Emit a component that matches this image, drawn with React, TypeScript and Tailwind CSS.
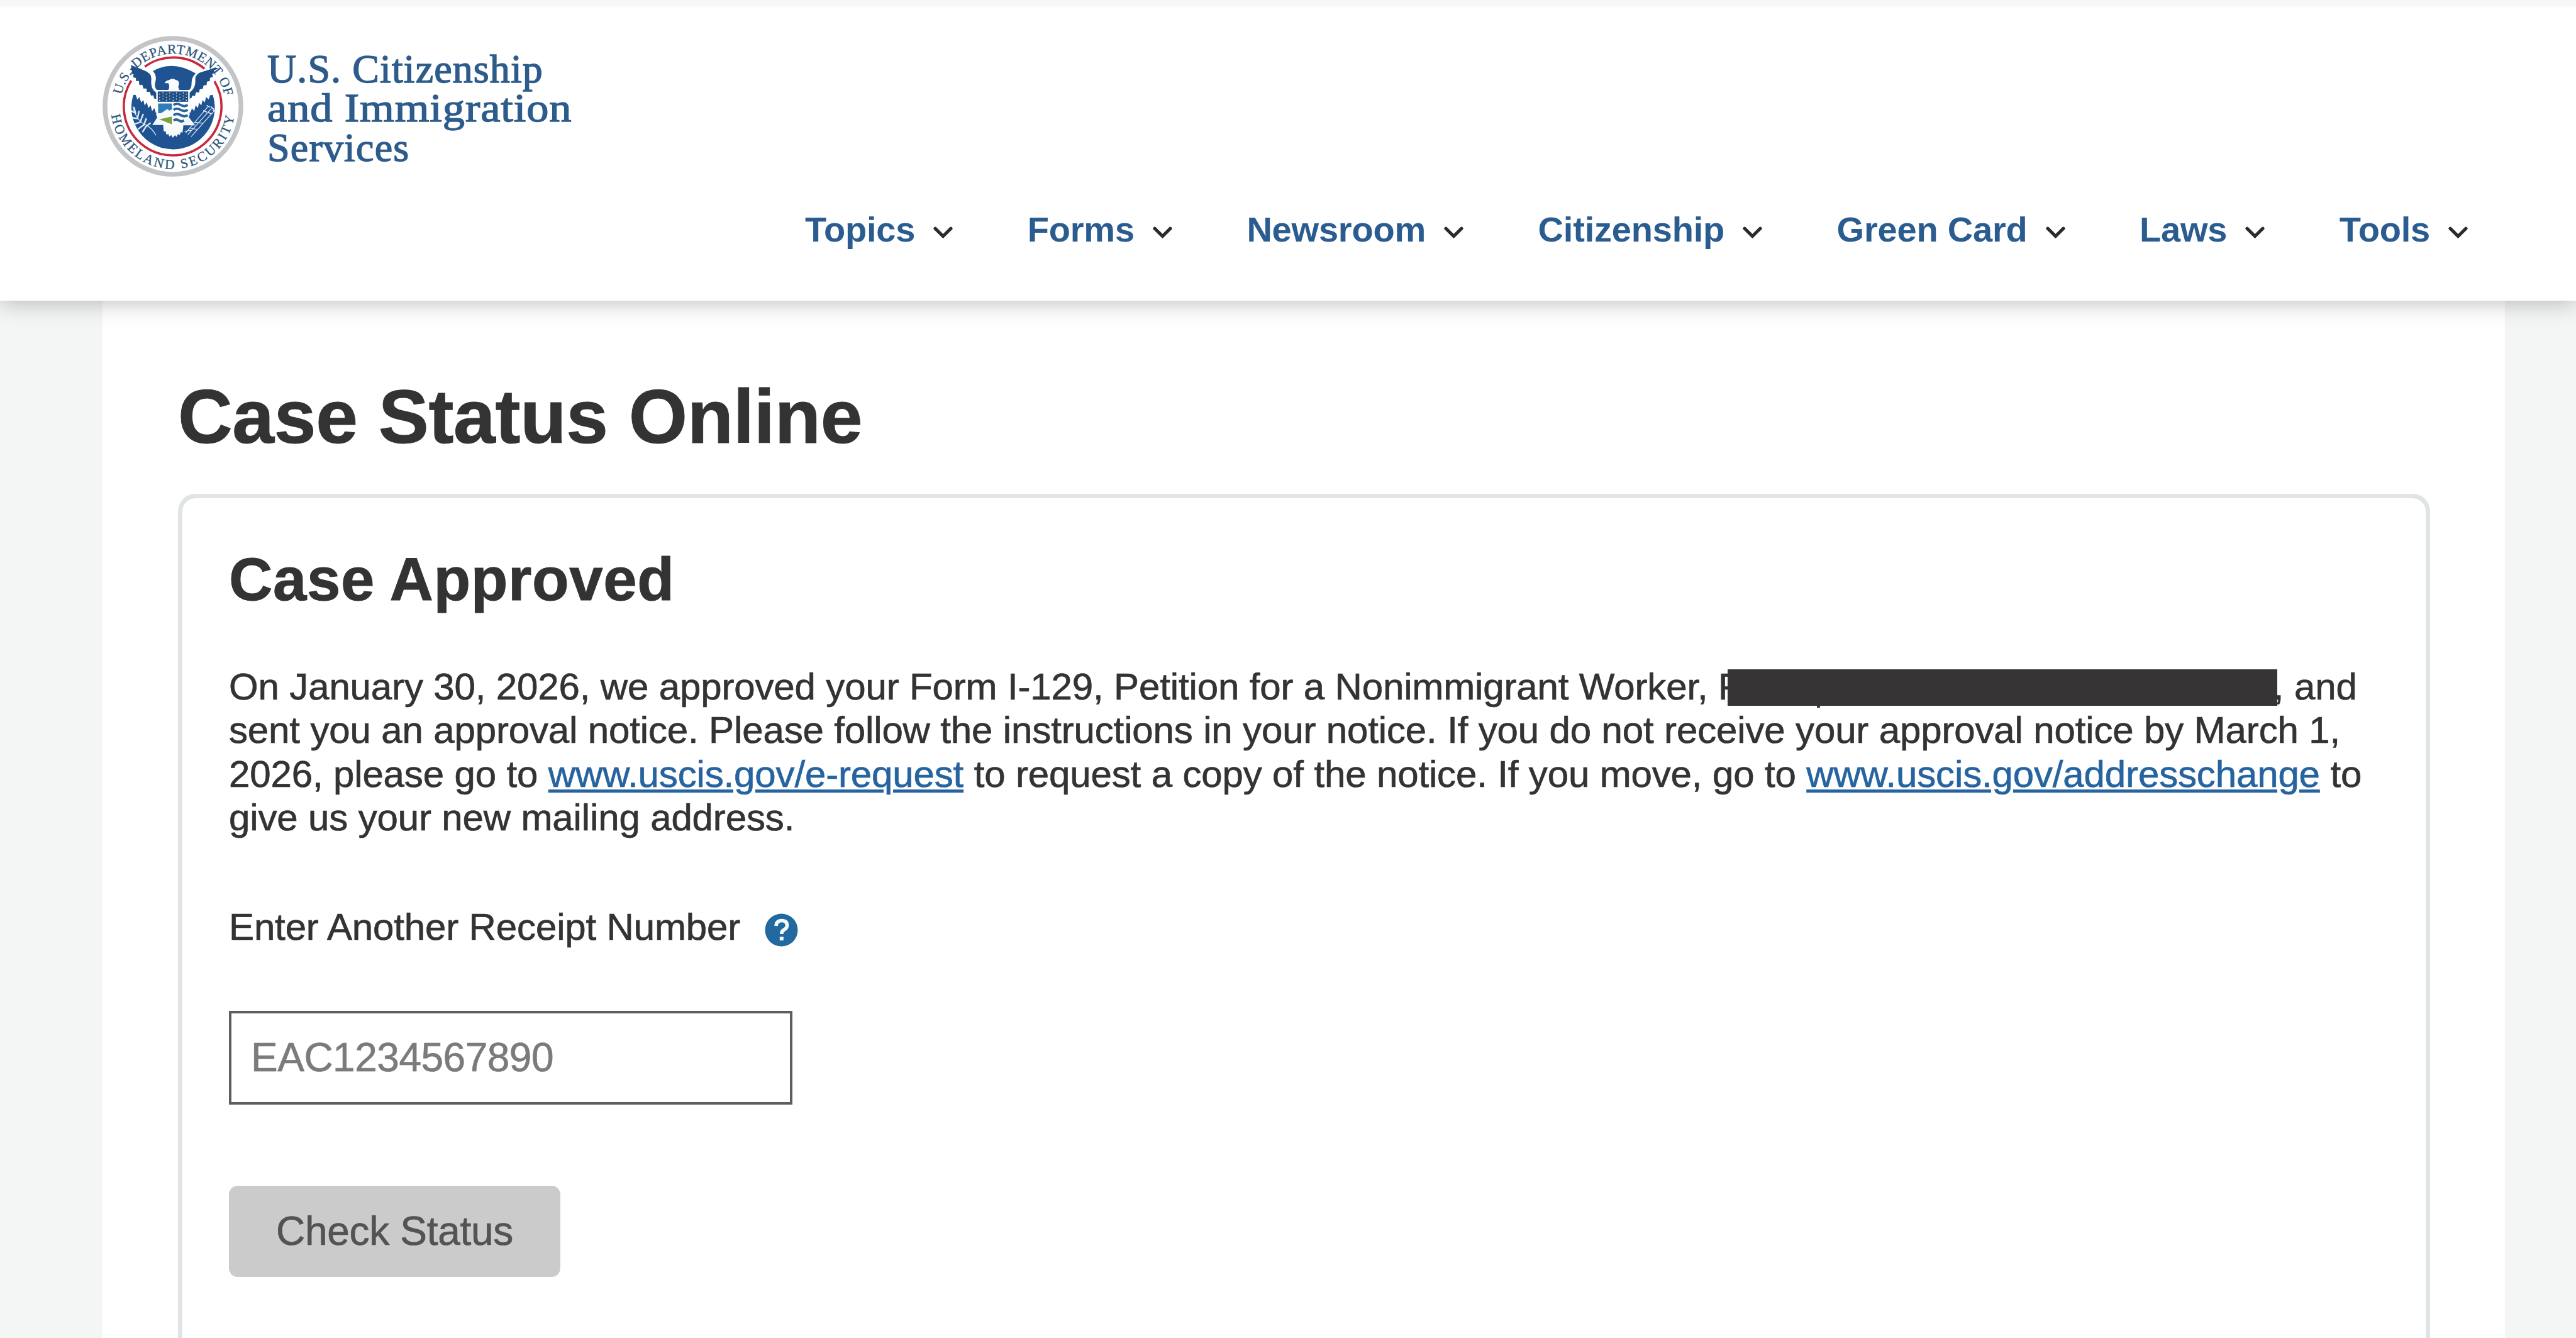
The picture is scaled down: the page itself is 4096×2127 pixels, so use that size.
import React, { useState } from 'react';

const NAV_ITEMS = ['Topics', 'Forms', 'Newsroom', 'Citizenship', 'Green Card', 'Laws', 'Tools'];

const Chevron: React.FC = () => (
  <svg className="w-[31px] h-[19px] mt-[8px]" viewBox="0 0 31 19" fill="none">
    <path d="M3 3.2 L15.5 15.5 L28 3.2" stroke="#2b2b2b" strokeWidth="5.2" strokeLinecap="round" />
  </svg>
);

const Seal: React.FC = () => (
  <svg className="w-[224px] h-[224px] shrink-0" viewBox="68 70 750 750">
    <defs>
      <path id="sealTop" d="M170 384 A280 280 0 0 1 719 396" />
      <path id="sealBottom" d="M114 487 A331 331 0 0 0 772 480" />
    </defs>
    <circle cx="443" cy="445" r="362" fill="#ffffff" stroke="#c3c4c8" strokeWidth="25" />

    {/* red ring, broken by the wing tips */}
    <g fill="none" stroke="#c8283c" strokeWidth="12">
      <path d="M293 234 A260 260 0 0 1 611 245" />
      <path d="M221 308 A260 260 0 1 0 664 312" />
    </g>

    {/* lettering */}
    <g fill="#2c557c" stroke="#2c557c" strokeWidth="1" fontFamily="'Liberation Serif', serif" fontSize="72">
      <text>
        <textPath href="#sealTop" textLength="130" lengthAdjust="spacing">U.S.</textPath>
      </text>
      <text>
        <textPath href="#sealTop" startOffset="160" textLength="604" lengthAdjust="spacing">DEPARTMENT OF</textPath>
      </text>
      <text>
        <textPath href="#sealBottom" startOffset="5" textLength="944" lengthAdjust="spacing">HOMELAND SECURITY</textPath>
      </text>
    </g>

    {/* field */}
    <path
      fill="#1f5391"
      d="M232 385 L244 384 L254 410 L264 396 L274 424 L286 412 L292 440 L304 424 L312 454 L324 440 L332 470 L344 454 L352 480 L362 464 L362 515 L525 515 L525 466 L536 480 L544 456 L556 470 L564 440 L576 454 L582 426 L594 440 L600 412 L612 424 L620 396 L634 408 L640 386 L655 384 A222 222 0 1 1 232 385 Z"
    />
    <path fill="#1f5391" d="M336 258 Q440 196 564 270 Q542 290 542 320 Q544 352 524 362 L362 362 Q340 348 350 312 Q358 278 336 258 Z" />

    {/* wings */}
    <path
      fill="#1f4f88"
      d="M218 226 Q250 236 290 254 Q330 268 328 300 Q322 356 358 374 L362 408 L344 404 L338 386 L326 388 L320 368 L304 368 L302 350 L286 350 L280 330 L264 332 L262 310 L246 310 L246 294 L230 290 L234 276 L220 268 L226 256 L214 248 L222 240 Z"
    />
    <path
      fill="#1f4f88"
      d="M668 238 Q632 252 604 260 Q562 270 562 300 Q566 350 528 374 L525 408 L542 400 L546 388 L560 390 L566 370 L582 372 L586 354 L602 352 L606 334 L622 332 L624 314 L640 310 L640 294 L656 288 L652 274 L668 264 L660 254 L686 244 Z"
    />

    {/* head */}
    <path fill="#fbfdff" d="M398 322 Q406 306 422 305 Q440 292 458 304 Q478 306 475 330 Q466 340 480 362 L416 362 Q430 340 418 322 Z" />

    {/* tail and legs */}
    <path
      fill="#f8fbfe"
      d="M390 535 L500 535 L494 585 L484 582 L480 598 L470 592 L462 608 L454 598 L442 612 L434 598 L424 606 L418 592 L408 596 L404 578 L394 578 Z"
    />
    <path fill="#f0f6fb" d="M362 500 L333 545 L400 545 L400 510 Z M525 500 L562 546 L485 546 L490 510 Z" />

    {/* shield */}
    <path fill="#ffffff" d="M354 358 H532 V490 Q520 535 443 550 Q366 535 354 490 Z" />
    <rect x="362" y="366" width="162" height="55" fill="#1f4d84" />
    <g fill="#e4edf6">
      {[372, 390, 408, 426, 444, 462, 480, 498, 514].map((x, i) => (
        <g key={x}>
          <circle cx={x} cy={i % 2 ? 374 : 380} r="3" />
          <circle cx={x} cy={i % 2 ? 390 : 397} r="3" />
          <circle cx={x} cy={i % 2 ? 406 : 413} r="3" />
        </g>
      ))}
    </g>
    <rect x="364" y="430" width="74" height="52" fill="#2f7db6" />
    <path fill="#f7fbff" d="M364 486 L382 480 L412 460 L424 468 L438 462 V510 L364 520 Z" />
    <path fill="#7aa33a" d="M370 514 L438 499 V541 Z" />
    <g fill="none" stroke="#2a659f" strokeWidth="13">
      <path d="M446 438 Q464 426 484 438 T522 438" />
      <path d="M446 464 Q464 452 484 464 T522 464" />
      <path d="M446 492 Q464 480 484 492 T522 492" />
      <path d="M446 520 Q460 510 474 520 T502 520" />
    </g>

    {/* olive branch */}
    <g stroke="#e2ecf6" strokeWidth="8" strokeLinecap="round" fill="none">
      <path d="M230 445 Q245 520 300 545 Q330 560 352 598" strokeWidth="4" />
      <path d="M224 470 L244 482 M236 452 L244 482 M226 506 L252 510 M262 472 L254 510 M236 540 L268 530 M284 488 L268 530 M258 566 L286 545 M300 512 L288 545 M282 580 L300 552 M322 535 L300 552" />
    </g>

    {/* arrows */}
    <g stroke="#dfeaf5" strokeWidth="4" fill="none">
      <path d="M510 588 L630 446 M522 596 L648 456 M540 606 L662 470 M504 578 L545 572 M530 560 L570 568 M560 530 L600 535" />
      <path d="M622 440 L640 450 M645 446 L660 460 M656 462 L668 474 M604 468 L624 476 M630 478 L652 486" strokeWidth="6" />
    </g>
  </svg>
);

const HelpIcon: React.FC = () => (
  <svg className="w-[53px] h-[53px] mt-[9px]" viewBox="0 0 53 53">
    <circle cx="26.5" cy="26.5" r="26" fill="#22699f" />
    <path d="M18 20 Q18.5 11.5 27 11.5 Q35.5 11.5 35.5 19 Q35.5 23.5 30 26.5 Q26.8 28.3 26.8 33" fill="none" stroke="#f4fbff" strokeWidth="5.6" />
    <rect x="23.8" y="37" width="6" height="6" fill="#f4fbff" />
  </svg>
);

const Header: React.FC = () => (
  <header className="relative z-10 h-[478px] bg-white shadow-[0_4px_34px_rgba(0,0,0,0.25)]">
    <div className="h-[14px] bg-linear-to-b from-[#f5f7f9] from-60% to-white" />
    <div className="flex pl-[163px] pt-[43px]">
      <Seal />
      <div className="flex flex-col items-start ml-[38px] mt-[22px] font-['Liberation_Serif',serif] text-[64px] leading-[62.4px] text-[#2d5c8c] whitespace-nowrap [-webkit-text-stroke:1.4px_#2d5c8c]">
        <p className="tracking-[1.1px]">U.S. Citizenship</p>
        <p className="tracking-[0.8px] origin-left scale-x-[1.1]">and Immigration</p>
        <p className="tracking-[1.2px]">Services</p>
      </div>
    </div>
    <nav className="flex justify-end gap-[118.5px] pr-[172px] mt-[56px]">
      {NAV_ITEMS.map(item => (
        <a key={item} className="flex items-center gap-[29px] text-[56px] leading-[56px] font-bold tracking-[-0.2px] text-[#2b5c90] whitespace-nowrap">
          {item}
          <Chevron />
        </a>
      ))}
    </nav>
  </header>
);

const Notice: React.FC = () => (
  <div className="mt-[88px] text-[60px] leading-[69.4px] tracking-[-0.14px] whitespace-nowrap [-webkit-text-stroke:0.7px]">
    <p className="h-[69.4px]">
      On January 30, 2026, we approved your Form I-129, Petition for a Nonimmigrant Worker, P
      <span className="inline-block w-[874px] h-[58px] -ml-[25px] -mr-[6px] align-[-10px] bg-[#373435]">
        <span className="block w-[5px] h-[61px] ml-[142px] bg-[#373435]" />
      </span>
      , and
    </p>
    <p className="h-[69.4px]">
      sent you an approval notice. Please follow the instructions in your notice. If you do not receive your approval notice by March 1,
    </p>
    <p className="h-[69.4px]">
      2026, please go to{' '}
      <a className="text-[#27649f] underline decoration-[5px] underline-offset-[4px]">www.uscis.gov/e-request</a>
      {' '}to request a copy of the notice. If you move, go to{' '}
      <a className="text-[#27649f] underline decoration-[5px] underline-offset-[4px]">www.uscis.gov/addresschange</a>
      {' '}to
    </p>
    <p className="h-[69.4px]">give us your new mailing address.</p>
  </div>
);

export default function App() {
  const [receipt, setReceipt] = useState('');

  return (
    <div className="w-[4096px] h-[2127px] overflow-hidden flex flex-col bg-[#f4f6f6] font-['Liberation_Sans',sans-serif] text-[#333333]">
      <Header />
      <main className="flex-1 min-h-0 ml-[163px] mr-[113px] px-[120px] pt-[124px] bg-white">
        <h1 className="text-[120px] leading-[120px] font-bold tracking-[-0.3px] [-webkit-text-stroke:1px]">Case Status Online</h1>
        <section className="mt-[63px] mr-[-1px] h-[1500px] border-[7px] border-[#e1e4e4] rounded-[28px] pl-[74px] pt-[81px]">
          <h2 className="text-[96px] leading-[96px] font-bold tracking-[0.6px] [-webkit-text-stroke:1px]">Case Approved</h2>
          <Notice />
          <div className="flex items-center gap-[39px] mt-[109px] h-[60px]">
            <label htmlFor="receipt" className="text-[60px] leading-[60px] tracking-[-0.14px] [-webkit-text-stroke:0.7px]">
              Enter Another Receipt Number
            </label>
            <HelpIcon />
          </div>
          <input
            id="receipt"
            placeholder="EAC1234567890"
            value={receipt}
            onChange={e => setReceipt(e.target.value)}
            className="block mt-[103px] w-[896px] h-[149px] border-4 border-[#5d5e60] pl-[31px] text-[64px] tracking-[-0.5px] placeholder:text-[#7b7b7b] [-webkit-text-stroke:0.7px]"
          />
          <button
            type="button"
            disabled={!receipt}
            className="block mt-[129px] w-[527px] h-[145px] rounded-[14px] bg-[#cbcbcb] text-[64px] tracking-[-0.3px] text-[#535353] [-webkit-text-stroke:0.7px]"
          >
            Check Status
          </button>
        </section>
      </main>
    </div>
  );
}
